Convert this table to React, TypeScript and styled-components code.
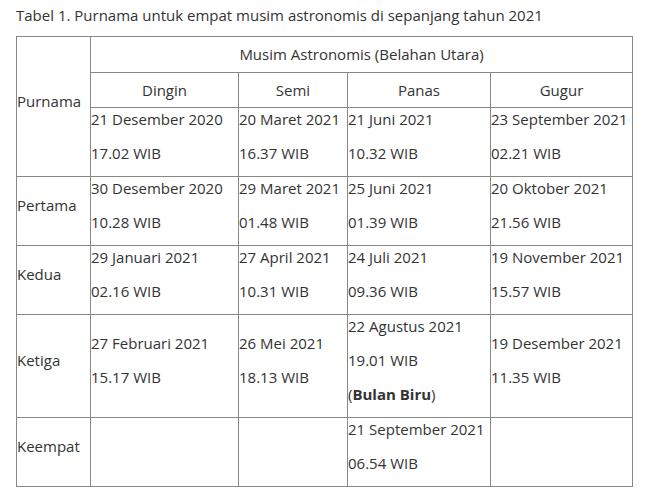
import styled, { createGlobalStyle } from 'styled-components';

const GlobalStyle = createGlobalStyle`
  body {
    margin: 0;
    background: #ffffff;
    font-family: 'Open Sans', 'Noto Sans', sans-serif;
    color: #333333;
  }
`;

const Page = styled.div`
  padding: 4px 16px;
`;

const Caption = styled.p`
  margin: 0 0 10px;
  font-size: 15px;
  line-height: 22px;
`;

const Table = styled.table`
  width: 616px;
  table-layout: fixed;
  border-collapse: collapse;
  font-size: 15px;
  line-height: 22px;
`;

const Head = styled.th`
  border: 1px solid #888888;
  padding: 6px 0 6.5px;
  font-weight: normal;
  text-align: center;
`;

const Cell = styled.td`
  border: 1px solid #888888;
  padding: 0;
  vertical-align: middle;
  text-align: left;
  white-space: nowrap;
  overflow: hidden;
`;

const Line = styled.p`
  margin: 0 0 12px;
`;

type Moon = { date: string; time: string; note?: string };
type Row = { label: string; cells: (Moon | null)[] };

const rows: Row[] = [
  {
    label: 'Pertama',
    cells: [
      { date: '30 Desember 2020', time: '10.28 WIB' },
      { date: '29 Maret 2021', time: '01.48 WIB' },
      { date: '25 Juni 2021', time: '01.39 WIB' },
      { date: '20 Oktober 2021', time: '21.56 WIB' },
    ],
  },
  {
    label: 'Kedua',
    cells: [
      { date: '29 Januari 2021', time: '02.16 WIB' },
      { date: '27 April 2021', time: '10.31 WIB' },
      { date: '24 Juli 2021', time: '09.36 WIB' },
      { date: '19 November 2021', time: '15.57 WIB' },
    ],
  },
  {
    label: 'Ketiga',
    cells: [
      { date: '27 Februari 2021', time: '15.17 WIB' },
      { date: '26 Mei 2021', time: '18.13 WIB' },
      { date: '22 Agustus 2021', time: '19.01 WIB', note: 'Bulan Biru' },
      { date: '19 Desember 2021', time: '11.35 WIB' },
    ],
  },
  {
    label: 'Keempat',
    cells: [null, null, { date: '21 September 2021', time: '06.54 WIB' }, null],
  },
];

const firstRow: Moon[] = [
  { date: '21 Desember 2020', time: '17.02 WIB' },
  { date: '20 Maret 2021', time: '16.37 WIB' },
  { date: '21 Juni 2021', time: '10.32 WIB' },
  { date: '23 September 2021', time: '02.21 WIB' },
];

const MoonCell = ({ moon }: { moon: Moon | null }) => (
  <Cell>
    {moon && (
      <>
        <Line>{moon.date}</Line>
        <Line>{moon.time}</Line>
        {moon.note && (
          <Line>
            (<strong>{moon.note}</strong>)
          </Line>
        )}
      </>
    )}
  </Cell>
);

export default function App() {
  return (
    <Page>
      <GlobalStyle />
      <Caption>Tabel 1. Purnama untuk empat musim astronomis di sepanjang tahun 2021</Caption>
      <Table>
        <colgroup>
          <col style={{ width: 74 }} />
          <col style={{ width: 148 }} />
          <col style={{ width: 109 }} />
          <col style={{ width: 143 }} />
          <col style={{ width: 142 }} />
        </colgroup>
        <tbody>
          <tr>
            <Cell rowSpan={3}>
              <Line>Purnama</Line>
            </Cell>
            <Head colSpan={4}>Musim Astronomis (Belahan Utara)</Head>
          </tr>
          <tr>
            <Head>Dingin</Head>
            <Head>Semi</Head>
            <Head>Panas</Head>
            <Head>Gugur</Head>
          </tr>
          <tr>
            {firstRow.map((m) => (
              <MoonCell key={m.date} moon={m} />
            ))}
          </tr>
          {rows.map((r) => (
            <tr key={r.label}>
              <Cell>
                <Line>{r.label}</Line>
              </Cell>
              {r.cells.map((m, i) => (
                <MoonCell key={i} moon={m} />
              ))}
            </tr>
          ))}
        </tbody>
      </Table>
    </Page>
  );
}
